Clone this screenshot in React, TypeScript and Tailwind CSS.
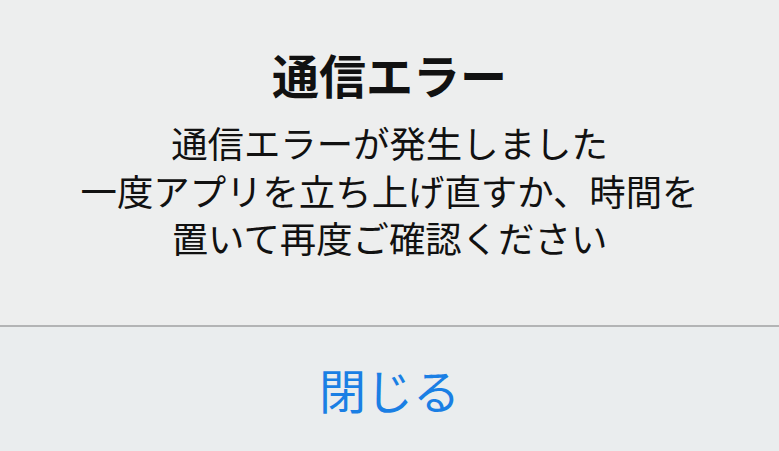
import React from 'react';

const font = { fontFamily: '"Noto Sans CJK JP", "Noto Sans", sans-serif' };

export default function App() {
  return (
    <div
      className="w-[779px] h-[451px] overflow-hidden flex flex-col bg-[#edeeee]"
      style={font}
    >
      {/* Message */}
      <div className="h-[325px] flex flex-col items-center pt-[46px] text-[#111111]">
        <h1 className="text-[47px] leading-[56px] font-bold">通信エラー</h1>
        <p className="mt-[17px] text-[36.4px] leading-[47.5px] text-center">
          通信エラーが発生しました
          <br />
          一度アプリを立ち上げ直すか、時間を
          <br />
          置いて再度ご確認ください
        </p>
      </div>

      {/* Separator */}
      <div className="h-[2px] bg-[#b3b4b5]" />

      {/* Action */}
      <button className="flex-1 flex items-center justify-center bg-[#eaedee] text-[#1a7fe4] text-[47px] leading-none pb-[2px]">
        閉じる
      </button>
    </div>
  );
}
